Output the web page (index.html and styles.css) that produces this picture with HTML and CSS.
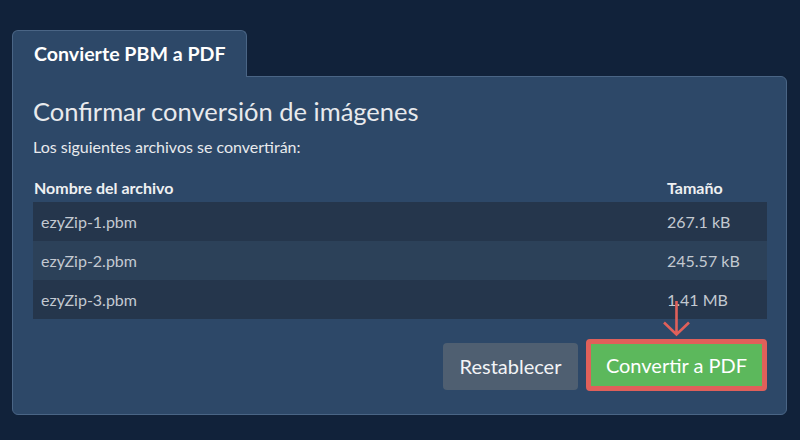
FILE: index.html
```html
<!DOCTYPE html>
<html lang="es">
<head>
<meta charset="utf-8">
<title>Convierte PBM a PDF</title>
<link rel="stylesheet" href="styles.css">
</head>
<body>
<div class="wrap">
  <div class="tab">Convierte PBM a PDF</div>
  <div class="panel">
    <h2 class="title">Confirmar conversión de imágenes</h2>
    <p class="sub">Los siguientes archivos se convertirán:</p>
    <div class="table">
      <div class="row head"><div class="c1">Nombre del archivo</div><div class="c2">Tamaño</div></div>
      <div class="row odd"><div class="c1">ezyZip-1.pbm</div><div class="c2">267.1 kB</div></div>
      <div class="row even"><div class="c1">ezyZip-2.pbm</div><div class="c2">245.57 kB</div></div>
      <div class="row odd"><div class="c1">ezyZip-3.pbm</div><div class="c2">1.41 MB</div></div>
    </div>
    <div class="actions">
      <button class="btn reset">Restablecer</button>
      <button class="btn convert">Convertir a PDF
        <svg class="arrow" width="30" height="37" viewBox="0 0 30 37"><path d="M14.5 1 V34.5 M2 22.5 L14.5 34.5 L27 22.5" fill="none" stroke="#e0605a" stroke-width="2.6"/></svg>
      </button>
    </div>
  </div>
</div>
</body>
</html>
```
FILE: styles.css
```css
html, body {
  margin: 0;
  padding: 0;
  background: #11223a;
  font-family: Lato, "Open Sans", sans-serif;
}
.wrap {
  padding: 30px 13px 0 12px;
}
.tab {
  position: relative;
  z-index: 1;
  width: 233px;
  height: 46px;
  margin-bottom: -1px;
  box-sizing: content-box;
  background: #2d4868;
  border: 1px solid #4a6585;
  border-bottom: none;
  border-radius: 6px 6px 0 0;
  color: #ffffff;
  font-weight: 700;
  font-size: 19.6px;
  line-height: 46px;
  text-indent: 21px;
}
.panel {
  background: #2d4868;
  border: 1px solid #4a6585;
  border-radius: 0 6px 6px 6px;
  padding: 19px 19px 23px 20px;
}
.title {
  margin: 0;
  font-size: 25.5px;
  line-height: 31px;
  font-weight: 400;
  color: #e8eaed;
}
.sub {
  margin: 10px 0 0;
  font-size: 16px;
  line-height: 19px;
  color: #e8eaed;
}
.table {
  margin-top: 17px;
}
.row {
  display: grid;
  grid-template-columns: 626px 1fr;
  height: 39px;
  line-height: 39px;
  font-size: 16px;
  color: #c3c9d1;
}
.row .c1, .row .c2 {
  padding-left: 8px;
}
.row.head {
  height: 29px;
  line-height: 29px;
  font-weight: 700;
  color: #eef0f2;
}
.row.head .c1 {
  padding-left: 1px;
}
.row.odd { background: #25364c; }
.row.even { background: #2c4159; }
.actions {
  margin-top: 20px;
  display: flex;
  justify-content: flex-end;
  align-items: center;
  gap: 8px;
  height: 52px;
}
.btn {
  font-family: Lato, "Open Sans", sans-serif;
  font-size: 20px;
  color: #f2f4f6;
  border: none;
  cursor: pointer;
  padding: 0;
}
.reset {
  width: 135px;
  height: 47px;
  margin-top: 2px;
  background: #4f5f71;
  border-radius: 4px;
}
.convert {
  position: relative;
  box-sizing: border-box;
  width: 181px;
  height: 52px;
  background: #5cb85c;
  border: 5px solid #e0605a;
  border-radius: 4px;
  color: #ffffff;
}
.arrow {
  position: absolute;
  left: 71px;
  top: -44px;
}
```
